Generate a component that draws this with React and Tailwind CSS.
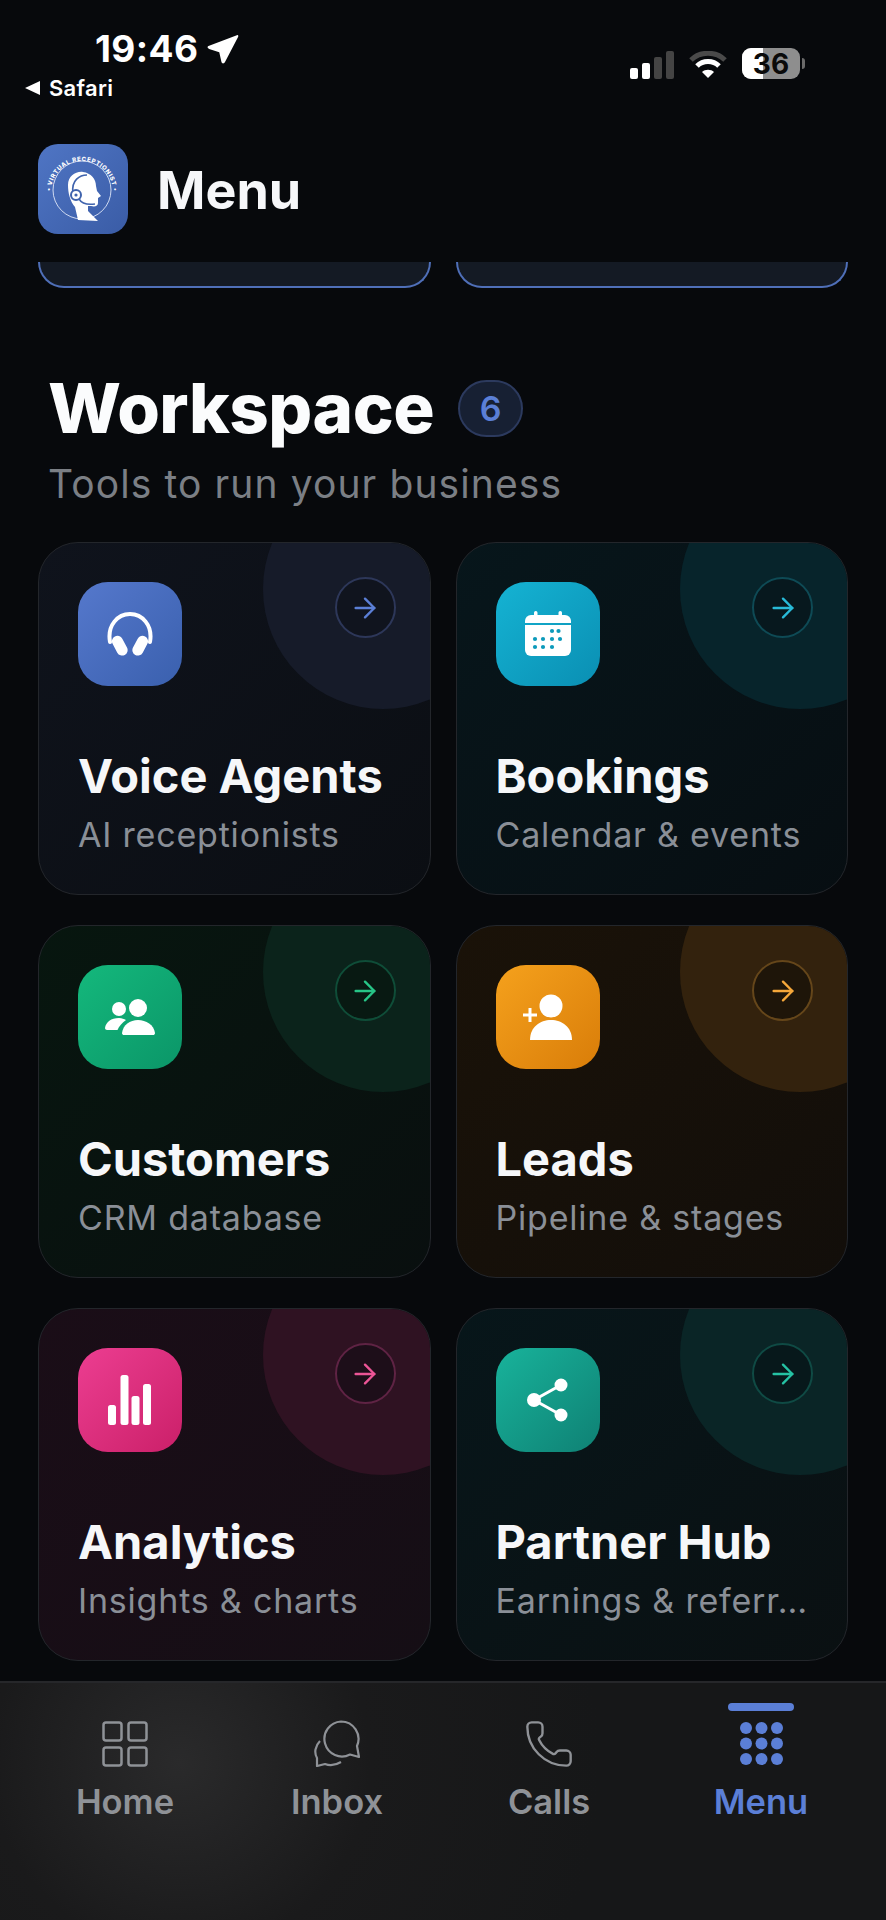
import { ArrowRight, Phone } from 'lucide-react';

const inter = "font-['Inter',sans-serif]";

function Logo() {
  return (
    <svg width="90" height="90" viewBox="0 0 90 90" className="shrink-0">
      <defs>
        <linearGradient id="logoBg" x1="0" y1="0" x2="1" y2="1">
          <stop offset="0" stopColor="#4f75c4" />
          <stop offset="1" stopColor="#3a5ca6" />
        </linearGradient>
        <path id="logoArc" d="M13 48 A31 31 0 0 1 75 48" fill="none" />
      </defs>
      <rect width="90" height="90" rx="20" fill="url(#logoBg)" />
      <circle cx="44" cy="46" r="29" fill="none" stroke="#dfe7f7" strokeWidth="0.9" />
      <text fontSize="6" fontWeight="800" fill="#fff" fontFamily="Inter, sans-serif">
        <textPath href="#logoArc" startOffset="1" textLength="95" lengthAdjust="spacing">• VIRTUAL RECEPTIONIST •</textPath>
      </text>
      <path
        d="M30 41C30 32 38 27 45 28C53 29 58 35 58 42L59 47L63 52L60 54L60 59C60 62 57 63 53 62L50 62L50 67L60 77L40 76L37 63C32 57 30 49 30 41Z"
        fill="#fff"
      />
      <path d="M35 49C33 36 42 31 49 31" fill="none" stroke="#3f63ad" strokeWidth="1.6" />
      <circle cx="38" cy="51" r="5" fill="#fff" stroke="#3f63ad" strokeWidth="2" />
      <circle cx="38" cy="51" r="1.6" fill="#3f63ad" />
      <path d="M41 55C44 60 50 61 57 60" fill="none" stroke="#3f63ad" strokeWidth="1.5" />
    </svg>
  );
}

function HeadphonesIcon() {
  return (
    <svg width="48" height="46" viewBox="0 0 48 46">
      <path d="M4 31C1 14 12 3 24 3C36 3 47 14 44 31" fill="none" stroke="#fff" strokeWidth="4" strokeLinecap="round" />
      <rect x="8" y="24" width="11" height="21" rx="5.500" fill="#fff" transform="rotate(-28 14 34)" />
      <rect x="29" y="24" width="11" height="21" rx="5.500" fill="#fff" transform="rotate(28 34 34)" />
    </svg>
  );
}

function CalendarIcon() {
  const dots = [
    [27, 20], [33.5, 20],
    [10, 28], [18, 28], [27, 28], [35, 28],
    [10, 36], [18, 36], [27, 36],
  ];
  return (
    <svg width="46" height="46" viewBox="0 0 46 46">
      <rect x="9" y="0" width="3.5" height="7" rx="1.7" fill="#fff" />
      <rect x="33.5" y="0" width="3.5" height="7" rx="1.7" fill="#fff" />
      <path d="M0 12V10A6 6 0 0 1 6 4H40A6 6 0 0 1 46 10V12Z" fill="#fff" />
      <path d="M0 14H46V39A6 6 0 0 1 40 45H6A6 6 0 0 1 0 39Z" fill="#fff" />
      {dots.map(([cx, cy]) => (
        <circle key={`${cx}-${cy}`} cx={cx} cy={cy} r="2.1" fill="#0c9abb" />
      ))}
    </svg>
  );
}

function PeopleIcon() {
  return (
    <svg width="50" height="38" viewBox="0 0 50 38" fill="#fff">
      <circle cx="33" cy="10" r="9" />
      <path d="M17 35C18 27 25 22 33 22C41 22 49 27 50 35C50 36.500 49 37 48 37H19C18 37 17 36.500 17 35Z" />
      <circle cx="14" cy="11" r="7" />
      <path d="M0 30C1 24 6 20 14 20C17 20 19 21 21 22C17 25 14 28 12.500 32H2C1 32 0 31 0 30Z" />
    </svg>
  );
}

function LeadIcon() {
  return (
    <svg width="50" height="46" viewBox="0 0 50 46" fill="#fff">
      <circle cx="28" cy="12" r="11.500" />
      <path d="M7 46C7 33 17 26 28 26C39 26 49 33 49 46Z" />
      <path d="M7 14V28M0 21H14" fill="none" stroke="#fff" strokeWidth="3" />
    </svg>
  );
}

function BarsIcon() {
  return (
    <svg width="44" height="50" viewBox="0 0 44 50" fill="#fff">
      <rect x="0" y="30" width="8" height="20" rx="2.500" />
      <rect x="12.500" y="0" width="8" height="50" rx="2.500" />
      <rect x="23.500" y="21" width="8" height="29" rx="2.500" />
      <rect x="35" y="9" width="8" height="41" rx="2.500" />
    </svg>
  );
}

function ShareIcon() {
  return (
    <svg width="42" height="44" viewBox="0 0 42 44" fill="#fff">
      <path d="M34 7L7 22L34 37" fill="none" stroke="#fff" strokeWidth="3" />
      <circle cx="34" cy="7" r="6.500" />
      <circle cx="7" cy="22" r="7" />
      <circle cx="34" cy="37" r="6.500" />
    </svg>
  );
}

function HomeIcon() {
  return (
    <svg width="46" height="46" viewBox="0 0 46 46" fill="none" stroke="#8f9297" strokeWidth="2.500">
      <rect x="1.500" y="1.500" width="18" height="18" rx="2.500" />
      <rect x="26.500" y="1.500" width="18" height="18" rx="2.500" />
      <rect x="1.500" y="26.500" width="18" height="18" rx="2.500" />
      <rect x="26.500" y="26.500" width="18" height="18" rx="2.500" />
    </svg>
  );
}

function InboxIcon() {
  return (
    <svg width="47" height="47" viewBox="0 0 47 47" fill="none" stroke="#8f9297" strokeWidth="2.200" strokeLinejoin="round">
      <path d="M27 1.500A17.500 17.500 0 0 1 43 26L45 37L36 34.500A17.500 17.500 0 1 1 27 1.500Z" />
      <path d="M6 21C1 26 0 33 3 38L3 46L11 44C16 46 22 45 27 42" />
    </svg>
  );
}

function MenuIcon() {
  const spots = [6, 21.500, 37];
  return (
    <svg width="43" height="43" viewBox="0 0 43 43" fill="#5b7fd6">
      {spots.flatMap((cy) =>
        spots.map((cx) => <circle key={`${cx}-${cy}`} cx={cx} cy={cy} r="6" />)
      )}
    </svg>
  );
}

const tiles = [
  {
    title: 'Voice Agents',
    sub: 'AI receptionists',
    icon: <HeadphonesIcon />,
    card: 'from-[#0f131c] to-[#0b0e13]',
    blob: 'bg-[#161b29]',
    badge: 'from-[#5578cc] to-[#3a60ae]',
    ring: 'border-[#2d3759] bg-[#10141e]',
    arrow: 'text-[#5b7fd6]',
  },
  {
    title: 'Bookings',
    sub: 'Calendar & events',
    icon: <CalendarIcon />,
    card: 'from-[#07161b] to-[#070e12]',
    blob: 'bg-[#07242b]',
    badge: 'from-[#15b3d3] to-[#0a8fb3]',
    ring: 'border-[#0e4a55] bg-[#07181e]',
    arrow: 'text-[#28bad8]',
  },
  {
    title: 'Customers',
    sub: 'CRM database',
    icon: <PeopleIcon />,
    card: 'from-[#07160f] to-[#090f0f]',
    blob: 'bg-[#0b231b]',
    badge: 'from-[#14b87c] to-[#0b9668]',
    ring: 'border-[#0f4d38] bg-[#081912]',
    arrow: 'text-[#27c587]',
  },
  {
    title: 'Leads',
    sub: 'Pipeline & stages',
    icon: <LeadIcon />,
    card: 'from-[#1a1208] to-[#120e0a]',
    blob: 'bg-[#33220d]',
    badge: 'from-[#f5a11c] to-[#d97d08]',
    ring: 'border-[#65461a] bg-[#1e1509]',
    arrow: 'text-[#f5a73a]',
  },
  {
    title: 'Analytics',
    sub: 'Insights & charts',
    icon: <BarsIcon />,
    card: 'from-[#1a0d17] to-[#150e15]',
    blob: 'bg-[#2f1222]',
    badge: 'from-[#ec3d91] to-[#cb1f69]',
    ring: 'border-[#5f2344] bg-[#1d0e19]',
    arrow: 'text-[#ec5596]',
  },
  {
    title: 'Partner Hub',
    sub: 'Earnings & referr…',
    icon: <ShareIcon />,
    card: 'from-[#07161a] to-[#0a1012]',
    blob: 'bg-[#0a2526]',
    badge: 'from-[#18b39b] to-[#0f8174]',
    ring: 'border-[#0f4a44] bg-[#07181b]',
    arrow: 'text-[#25c2a4]',
  },
];

function Tile({ tile }) {
  return (
    <div className={`relative h-[353px] overflow-hidden rounded-[40px] border border-[#23262b] bg-linear-to-br ${tile.card} px-[39px] pt-[39px]`}>
      <div className={`absolute -right-[73px] -top-[74px] size-[240px] rounded-full ${tile.blob}`} />
      <div className={`absolute right-[34px] top-[34px] flex size-[61px] items-center justify-center rounded-full border-2 ${tile.ring}`}>
        <ArrowRight size={32} strokeWidth={1.8} className={tile.arrow} />
      </div>
      <div className={`relative flex size-[104px] items-center justify-center rounded-[30px] bg-linear-to-br ${tile.badge}`}>
        {tile.icon}
      </div>
      <div className="relative mt-[62px] whitespace-nowrap text-[47px] font-bold leading-[56px] text-[#f6f7f9]">
        {tile.title}
      </div>
      <div className="relative mt-[11px] whitespace-nowrap text-[34px] leading-[40px] tracking-[0.8px] text-[#8a8f97]">
        {tile.sub}
      </div>
    </div>
  );
}

function NavItem({ icon, label, active }) {
  return (
    <div className="relative flex flex-col items-center pt-[37px]">
      {active && <div className="absolute top-[20px] h-[8px] w-[66px] rounded-full bg-[#5b7fd6]" />}
      <div className="flex h-[47px] items-center justify-center">{icon}</div>
      <div className={`mt-[15px] text-[34.500px] font-semibold leading-[40px] ${active ? 'text-[#5b7fd6]' : 'text-[#8f9297]'}`}>
        {label}
      </div>
    </div>
  );
}

export default function App() {
  return (
    <div className={`${inter} flex h-[1920px] w-[886px] flex-col overflow-hidden bg-[#07090c] text-white`}>
      {/* Status bar */}
      <div className="flex h-[144px] shrink-0 items-start justify-between">
        <div className="pl-[25px] pt-[27px]">
          <div className="flex items-center gap-[9px] pl-[70px]">
            <span className="text-[37px] font-bold leading-[44px] tracking-[0.4px]">19:46</span>
            <svg width="32" height="32" viewBox="0 0 30 30" fill="#fff">
              <path d="M28 2C29 1.500 30 2.500 29 4L17 27C16 29 14 29 13.500 27L11.500 18L2 15C0 14 0 12.500 2 12Z" />
            </svg>
          </div>
          <div className="mt-[5px] flex items-center gap-[9px]">
            <svg width="15" height="14" viewBox="0 0 15 14" fill="#fff">
              <path d="M15 0V14L0 7Z" />
            </svg>
            <span className="text-[22px] font-semibold leading-[24px] tracking-[0.3px]">Safari</span>
          </div>
        </div>
        <div className="flex items-center pr-[81px] pt-[48px]">
          <svg width="44" height="28" viewBox="0 0 44 28" className="mt-[3px]">
            <rect x="0" y="17" width="8" height="11" rx="2" fill="#fff" />
            <rect x="12" y="12" width="8" height="16" rx="2" fill="#fff" />
            <rect x="24" y="6" width="8" height="22" rx="2" fill="#444" />
            <rect x="36" y="0" width="8" height="28" rx="2" fill="#444" />
          </svg>
          <svg width="38" height="28" viewBox="0 0 38 28" className="ml-[15px] mt-[3px]" fill="none" strokeWidth="5">
            <path d="M2 9C11 0 27 0 36 9" stroke="#4a4a4a" />
            <path d="M8 15C14 9 24 9 30 15" stroke="#fff" />
            <path d="M19 27L13 21C16 18 22 18 25 21Z" fill="#fff" stroke="none" />
          </svg>
          <div className="relative ml-[15px] flex h-[31px] w-[58px] items-center justify-center overflow-hidden rounded-[9px] bg-[#8e8e8e]">
            <div className="absolute inset-y-0 left-0 w-[21px] bg-white" />
            <span className="relative text-[28px] font-bold leading-none text-[#0a0a0a]">36</span>
          </div>
          <div className="ml-[2px] h-[11px] w-[3px] rounded-r-full bg-[#6a6a6a]" />
        </div>
      </div>

      {/* Header */}
      <div className="flex h-[90px] shrink-0 items-center gap-[29px] pl-[38px]">
        <Logo />
        <h1 className="pt-[3px] text-[52px] font-bold leading-none text-[#f6f7f9]">Menu</h1>
      </div>

      {/* Cards scrolled under the header */}
      <div className="mt-[28px] grid h-[26px] shrink-0 grid-cols-2 gap-[25px] px-[38px]">
        <div className="rounded-b-[30px] border-x-2 border-b-2 border-[#4f6fb8] bg-[#141a24]" />
        <div className="rounded-b-[30px] border-x-2 border-b-2 border-[#4f6fb8] bg-[#141a24]" />
      </div>

      {/* Section heading */}
      <div className="mt-[84px] flex items-center gap-[24px] pl-[48px]">
        <h2 className="text-[69px] font-extrabold leading-[72px] tracking-[-0.5px] text-[#fbfcfd]">Workspace</h2>
        <div className="flex h-[57px] w-[65px] items-center justify-center rounded-full border-2 border-[#2c3a5e] bg-[#172033] text-[34px] font-semibold text-[#5b7fd6]">
          6
        </div>
      </div>
      <p className="mt-[17px] pl-[48px] text-[39px] leading-[46px] tracking-[1.1px] text-[#7b7f85]">
        Tools to run your business
      </p>

      {/* Tiles */}
      <div className="mt-[35px] grid grid-cols-2 gap-x-[25px] gap-y-[30px] px-[38px]">
        {tiles.map((tile) => (
          <Tile key={tile.title} tile={tile} />
        ))}
      </div>

      {/* Bottom tab bar */}
      <div className="mt-auto grid h-[239px] shrink-0 grid-cols-4 border-t-2 border-[#26272a] bg-[#161718] bg-[radial-gradient(circle_at_180px_80px,#2a2a2b_0,#1a1a1b_190px,#161718_420px)] px-[19px]">
        <NavItem icon={<HomeIcon />} label="Home" />
        <NavItem icon={<InboxIcon />} label="Inbox" />
        <NavItem icon={<Phone size={52} strokeWidth={1.1} className="text-[#8f9297]" />} label="Calls" />
        <NavItem icon={<MenuIcon />} label="Menu" active />
      </div>
    </div>
  );
}
